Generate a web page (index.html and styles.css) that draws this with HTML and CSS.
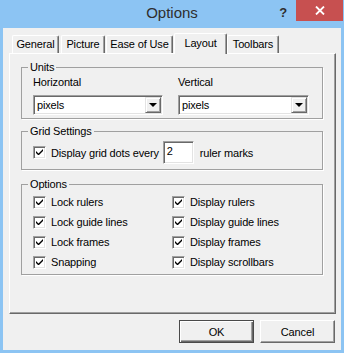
FILE: index.html
```html
<!DOCTYPE html>
<html lang="en">
<head>
    <meta charset="UTF-8">
    <meta name="viewport" content="width=device-width, initial-scale=1.0">
    <title>Options</title>
    <link rel="stylesheet" href="styles.css">
</head>
<body>
    <div class="window">
        <div class="titlebar">
            <div class="tb-side"></div>
            <div class="tb-title">Options</div>
            <div class="tb-side tb-controls">
                <span class="help">?</span>
                <span class="close">
                    <svg width="10" height="9" viewBox="0 0 10 9">
                        <path d="M1 0.5 L9 8.5 M9 0.5 L1 8.5" stroke="#fff" stroke-width="1.8" fill="none"/>
                    </svg>
                </span>
            </div>
        </div>

        <div class="client">
            <div class="tabs">
                <div class="tab tab-general">General</div>
                <div class="tab tab-picture">Picture</div>
                <div class="tab tab-ease">Ease of Use</div>
                <div class="tab tab-layout active">Layout</div>
                <div class="tab tab-toolbars">Toolbars</div>
            </div>

            <div class="panel">
                <fieldset class="group group-units">
                    <legend>Units</legend>
                    <div class="units-row">
                        <div class="unit-col unit-h">
                            <div class="unit-label">Horizontal</div>
                            <div class="combo combo-h">
                                <span class="combo-text">pixels</span>
                                <span class="combo-btn"><span class="arrow"></span></span>
                            </div>
                        </div>
                        <div class="unit-col unit-v">
                            <div class="unit-label">Vertical</div>
                            <div class="combo combo-v">
                                <span class="combo-text">pixels</span>
                                <span class="combo-btn"><span class="arrow"></span></span>
                            </div>
                        </div>
                    </div>
                </fieldset>

                <fieldset class="group group-grid">
                    <legend>Grid Settings</legend>
                    <div class="grid-row">
                        <span class="check"><svg width="7" height="7" viewBox="0 0 7 7"><path d="M0 2 L0 4 L2 6 L3 6 L7 2 L7 0 L2.5 4.5 Z" fill="#000"/></svg></span>
                        <span class="check-label">Display grid dots every</span>
                        <span class="textbox">2</span>
                        <span class="after-box">ruler marks</span>
                    </div>
                </fieldset>

                <fieldset class="group group-options">
                    <legend>Options</legend>
                    <div class="options-grid">
                        <div class="opt"><span class="check"><svg width="7" height="7" viewBox="0 0 7 7"><path d="M0 2 L0 4 L2 6 L3 6 L7 2 L7 0 L2.5 4.5 Z" fill="#000"/></svg></span><span class="check-label">Lock rulers</span></div>
                        <div class="opt"><span class="check"><svg width="7" height="7" viewBox="0 0 7 7"><path d="M0 2 L0 4 L2 6 L3 6 L7 2 L7 0 L2.5 4.5 Z" fill="#000"/></svg></span><span class="check-label">Display rulers</span></div>
                        <div class="opt"><span class="check"><svg width="7" height="7" viewBox="0 0 7 7"><path d="M0 2 L0 4 L2 6 L3 6 L7 2 L7 0 L2.5 4.5 Z" fill="#000"/></svg></span><span class="check-label">Lock guide lines</span></div>
                        <div class="opt"><span class="check"><svg width="7" height="7" viewBox="0 0 7 7"><path d="M0 2 L0 4 L2 6 L3 6 L7 2 L7 0 L2.5 4.5 Z" fill="#000"/></svg></span><span class="check-label">Display guide lines</span></div>
                        <div class="opt"><span class="check"><svg width="7" height="7" viewBox="0 0 7 7"><path d="M0 2 L0 4 L2 6 L3 6 L7 2 L7 0 L2.5 4.5 Z" fill="#000"/></svg></span><span class="check-label">Lock frames</span></div>
                        <div class="opt"><span class="check"><svg width="7" height="7" viewBox="0 0 7 7"><path d="M0 2 L0 4 L2 6 L3 6 L7 2 L7 0 L2.5 4.5 Z" fill="#000"/></svg></span><span class="check-label">Display frames</span></div>
                        <div class="opt"><span class="check"><svg width="7" height="7" viewBox="0 0 7 7"><path d="M0 2 L0 4 L2 6 L3 6 L7 2 L7 0 L2.5 4.5 Z" fill="#000"/></svg></span><span class="check-label">Snapping</span></div>
                        <div class="opt"><span class="check"><svg width="7" height="7" viewBox="0 0 7 7"><path d="M0 2 L0 4 L2 6 L3 6 L7 2 L7 0 L2.5 4.5 Z" fill="#000"/></svg></span><span class="check-label">Display scrollbars</span></div>
                    </div>
                </fieldset>
            </div>

            <div class="buttons">
                <button class="btn btn-default">OK</button>
                <button class="btn">Cancel</button>
            </div>
        </div>
    </div>
</body>
</html>
```

FILE: styles.css
```css
body {
    margin: 0;
    padding: 0;
    font-family: "Liberation Sans", Arial, sans-serif;
    font-size: 11px;
    letter-spacing: -0.15px;
    color: #000;
}

.window {
    width: 344px;
    height: 353px;
    box-sizing: border-box;
    background-color: #8cc4f3;
    padding: 0 3px 3px 3px;
    display: flex;
    flex-direction: column;
}

/* title bar */
.titlebar {
    height: 28px;
    margin: 0 -3px;
    display: flex;
    align-items: flex-start;
}

.tb-side {
    flex: 1;
}

.tb-title {
    font-size: 15px;
    letter-spacing: 0;
    color: #2e2e2e;
    line-height: 26px;
}

.tb-controls {
    display: flex;
    justify-content: flex-end;
    align-items: flex-start;
}

.help {
    font-size: 13px;
    font-weight: bold;
    color: #2e2e2e;
    line-height: 26px;
    margin-right: 9px;
}

.close {
    width: 47px;
    height: 21px;
    margin-right: 1px;
    background-color: #c75050;
    display: flex;
    align-items: center;
    justify-content: center;
}

/* client area */
.client {
    flex: 1;
    background-color: #f0f0f0;
    padding: 5px 5px 0 6px;
}

.tabs {
    display: flex;
    align-items: flex-end;
    height: 20px;
    padding-left: 3px;
}

.tab {
    box-sizing: border-box;
    height: 18px;
    line-height: 16px;
    text-align: center;
    border-top: 1px solid #fff;
    border-left: 1px solid #fff;
    border-right: 1px solid #696969;
    box-shadow: inset -1px 0 0 #a0a0a0;
    border-radius: 2px 2px 0 0;
}

.tab-general { width: 47px; margin-right: 2px; }
.tab-picture { width: 44px; margin-right: 1px; }
.tab-ease { width: 67px; margin-right: 1px; }
.tab-layout { width: 53px; }
.tab-toolbars { width: 52px; }

.tab.active {
    height: 21px;
    line-height: 18px;
    margin-bottom: -1px;
    position: relative;
    z-index: 1;
    background-color: #f0f0f0;
}

.panel {
    box-sizing: border-box;
    width: 327px;
    height: 261px;
    border: 1px solid;
    border-color: #fff #696969 #696969 #fff;
    box-shadow: inset -1px -1px 0 #a0a0a0;
    padding: 6px 12px 0 11px;
}

/* group boxes */
.group {
    box-sizing: border-box;
    width: 302px;
    margin: 0;
    padding: 0 11px;
    border: 1px solid #a0a0a0;
    box-shadow: 1px 1px 0 #fff;
    min-inline-size: 0;
}

.group legend {
    line-height: 14px;
    padding: 0 2px;
    margin-left: -5px;
}

.group-units {
    padding-top: 1px;
    padding-bottom: 3px;
}

.units-row {
    display: flex;
}

.unit-h {
    width: 145px;
}

.unit-label {
    line-height: 14px;
    margin-bottom: 6px;
}

.combo {
    box-sizing: border-box;
    height: 20px;
    display: flex;
    align-items: center;
    background-color: #fff;
    border: 1px solid;
    border-color: #a0a0a0 #fff #fff #a0a0a0;
    box-shadow: inset 1px 1px 0 #696969, inset -1px -1px 0 #e3e3e3;
    padding: 1px;
}

.combo-h { width: 130px; }
.combo-v { width: 131px; }

.combo-text {
    flex: 1;
    padding-left: 2px;
    line-height: 16px;
}

.combo-btn {
    box-sizing: border-box;
    width: 16px;
    height: 16px;
    background-color: #f0f0f0;
    border: 1px solid;
    border-color: #e3e3e3 #696969 #696969 #e3e3e3;
    box-shadow: inset 1px 1px 0 #fff, inset -1px -1px 0 #a0a0a0;
    display: flex;
    align-items: center;
    justify-content: center;
}

.arrow {
    width: 0;
    height: 0;
    border-left: 4px solid transparent;
    border-right: 4px solid transparent;
    border-top: 4px solid #000;
}

/* checkboxes */
.check {
    box-sizing: border-box;
    width: 13px;
    height: 13px;
    flex: none;
    background-color: #fff;
    border: 1px solid;
    border-color: #a0a0a0 #fff #fff #a0a0a0;
    box-shadow: inset 1px 1px 0 #696969, inset -1px -1px 0 #e3e3e3;
    display: flex;
    align-items: center;
    justify-content: center;
    margin-right: 5px;
}

.group-grid {
    margin-top: 5px;
    padding-top: 3px;
    padding-bottom: 5px;
}

.grid-row {
    display: flex;
    align-items: center;
    height: 23px;
}

.textbox {
    box-sizing: border-box;
    width: 31px;
    height: 23px;
    margin-left: 4px;
    padding-left: 3px;
    line-height: 19px;
    background-color: #fff;
    border: 1px solid;
    border-color: #a0a0a0 #fff #fff #a0a0a0;
    box-shadow: inset 1px 1px 0 #696969, inset -1px -1px 0 #e3e3e3;
}

.after-box {
    margin-left: 6px;
}

.group-options {
    margin-top: 7px;
    padding-top: 1px;
    padding-bottom: 2px;
}

.options-grid {
    display: grid;
    grid-template-columns: 139px 1fr;
    grid-auto-rows: 20px;
}

.opt {
    display: flex;
    align-items: center;
}

/* dialog buttons */
.buttons {
    display: flex;
    justify-content: flex-end;
    gap: 6px;
    margin-top: 6px;
    margin-right: 1px;
}

.btn {
    box-sizing: border-box;
    width: 75px;
    height: 23px;
    margin: 0;
    padding: 0;
    font-family: "Liberation Sans", Arial, sans-serif;
    font-size: 11px;
    letter-spacing: -0.15px;
    color: #000;
    background-color: #f0f0f0;
    border: 1px solid;
    border-color: #fff #696969 #696969 #fff;
    box-shadow: inset -1px -1px 0 #a0a0a0;
}

.btn-default {
    border: 1px solid #4a4a4a;
    box-shadow: inset 1px 1px 0 #fff, inset -1px -1px 0 #696969, inset -2px -2px 0 #a0a0a0;
}
```
